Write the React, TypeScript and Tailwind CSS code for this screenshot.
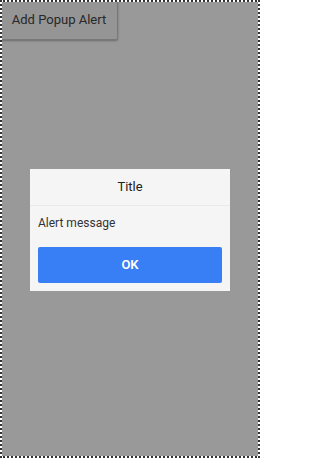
export default function App() {
  return (
    <div
      className="relative h-[458px] w-[260px] overflow-hidden border-2 border-dotted border-[#333] bg-white"
      style={{ fontFamily: "Roboto, 'Noto Sans', sans-serif" }}
    >
      <button className="m-0 -ml-[2px] -mt-[2px] h-[40px] w-[118px] rounded-[2px] border border-[#c8c8c8] bg-[#f8f8f8] text-[13px] text-[#444] shadow-[0_1px_2px_rgba(0,0,0,0.3)]">
        Add Popup Alert
      </button>

      <div className="absolute inset-0 flex items-center justify-center bg-black/40">
        <div className="mt-[1px] flex w-[200px] flex-col bg-[#f5f5f5]">
          <div className="flex h-[37px] items-center justify-center border-b border-[#eaeaea] text-[13px] text-[#222]">
            Title
          </div>
          <div className="px-[8px] pt-[9px] pb-[15px] text-[12px] leading-[17px] text-[#333]">Alert message</div>
          <div className="px-[8px] pb-[8px]">
            <button className="h-[36px] w-full rounded-[2px] bg-[#387ef5] text-[13px] font-semibold text-white">
              OK
            </button>
          </div>
        </div>
      </div>
    </div>
  );
}
